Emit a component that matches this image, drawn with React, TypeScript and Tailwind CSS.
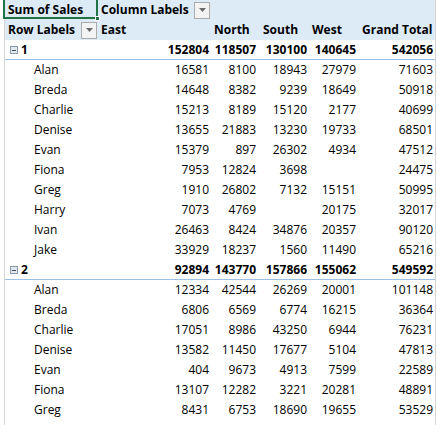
import React from 'react'

type Row = { name: string; v: (number | null)[] }
type Group = { id: number; total: number[]; rows: Row[] }

const groups: Group[] = [
  {
    id: 1,
    total: [152804, 118507, 130100, 140645, 542056],
    rows: [
      { name: 'Alan', v: [16581, 8100, 18943, 27979, 71603] },
      { name: 'Breda', v: [14648, 8382, 9239, 18649, 50918] },
      { name: 'Charlie', v: [15213, 8189, 15120, 2177, 40699] },
      { name: 'Denise', v: [13655, 21883, 13230, 19733, 68501] },
      { name: 'Evan', v: [15379, 897, 26302, 4934, 47512] },
      { name: 'Fiona', v: [7953, 12824, 3698, null, 24475] },
      { name: 'Greg', v: [1910, 26802, 7132, 15151, 50995] },
      { name: 'Harry', v: [7073, 4769, null, 20175, 32017] },
      { name: 'Ivan', v: [26463, 8424, 34876, 20357, 90120] },
      { name: 'Jake', v: [33929, 18237, 1560, 11490, 65216] },
    ],
  },
  {
    id: 2,
    total: [92894, 143770, 157866, 155062, 549592],
    rows: [
      { name: 'Alan', v: [12334, 42544, 26269, 20001, 101148] },
      { name: 'Breda', v: [6806, 6569, 6774, 16215, 36364] },
      { name: 'Charlie', v: [17051, 8986, 43250, 6944, 76231] },
      { name: 'Denise', v: [13582, 11450, 17677, 5104, 47813] },
      { name: 'Evan', v: [404, 9673, 4913, 7599, 22589] },
      { name: 'Fiona', v: [13107, 12282, 3221, 20281, 48891] },
      { name: 'Greg', v: [8431, 6753, 18690, 19655, 53529] },
    ],
  },
]

const cols = 'grid grid-cols-[93px_114px_47px_51px_49px_77px]'

function DropButton() {
  return (
    <span className="flex h-[17px] w-[16px] items-center justify-center border border-[#acacac] bg-[#f3f3f3]">
      <svg width="7" height="4" viewBox="0 0 7 4">
        <path d="M0 0h7L3.5 4z" fill="#6b6b6b" />
      </svg>
    </span>
  )
}

function Collapse() {
  return (
    <span className="flex h-[8px] w-[8px] items-center justify-center border border-[#8a9aad] bg-[#e3e9f0]">
      <span className="h-px w-[4px] bg-[#3b4a5c]" />
    </span>
  )
}

function Nums({ v, bold }: { v: (number | null)[]; bold?: boolean }) {
  return (
    <>
      {v.map((n, i) => (
        <div key={i} className={`pr-[3px] text-right ${bold ? 'font-bold' : ''}`}>
          {n === null ? '' : n}
        </div>
      ))}
    </>
  )
}

export default function App() {
  return (
    <div
      className="h-[425px] w-[437px] overflow-hidden bg-white text-[12px] leading-[20px] text-black"
      style={{ fontFamily: '"Open Sans", Lato, sans-serif' }}
    >
      <div className="ml-[4px] h-full w-[432px] border-x border-[#d4d4d4]">
        <div className="bg-[#ddebf7] font-bold">
          <div className={`${cols} h-[20px]`}>
            <div className="relative pl-[3px]">
              Sum of Sales
              <span className="absolute -left-[2px] -top-[2px] h-[21px] w-[95px] border-2 border-[#217346]" />
              <span className="absolute -right-[2px] top-[16px] h-[5px] w-[5px] border border-white bg-[#217346]" />
            </div>
            <div className="flex items-center justify-between pl-[3px] pr-[2px]">
              <span>Column Labels</span>
              <DropButton />
            </div>
            <div />
            <div />
            <div />
            <div />
          </div>
          <div className={`${cols} h-[20px]`}>
            <div className="flex items-center justify-between pl-[3px] pr-[1px]">
              <span>Row Labels</span>
              <DropButton />
            </div>
            <div className="pl-[3px]">East</div>
            <div className="pl-[2px]">North</div>
            <div className="pl-[4px]">South</div>
            <div className="pl-[2px]">West</div>
            <div className="pl-[3px]">Grand Total</div>
          </div>
        </div>
        {groups.map((g) => (
          <div key={g.id}>
            <div className={`${cols} h-[20px] border-b border-[#9bc2e6]`}>
              <div className="flex items-center gap-[3px] pl-[5px] font-bold">
                <Collapse />
                <span>{g.id}</span>
              </div>
              <Nums v={g.total} bold />
            </div>
            {g.rows.map((r) => (
              <div key={r.name} className={`${cols} h-[20px]`}>
                <div className="pl-[29px]">{r.name}</div>
                <Nums v={r.v} />
              </div>
            ))}
          </div>
        ))}
      </div>
    </div>
  )
}
